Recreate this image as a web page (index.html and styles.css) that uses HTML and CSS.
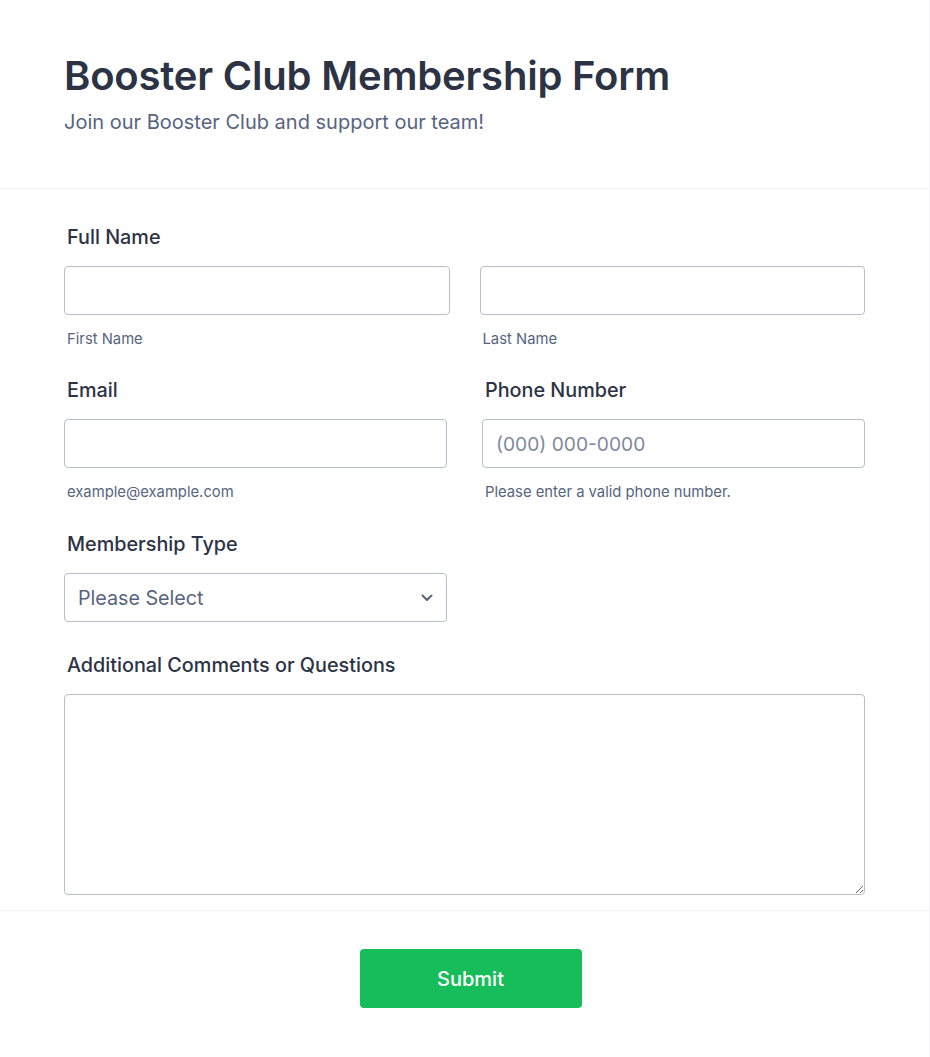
FILE: index.html
```html
<!DOCTYPE html>
<html lang="en">
<head>
<meta charset="utf-8">
<title>Booster Club Membership Form</title>
<link rel="stylesheet" href="styles.css">
</head>
<body>
<div class="card">
  <header class="form-header">
    <h1 class="title">Booster Club Membership Form</h1>
    <p class="subtitle">Join our Booster Club and support our team!</p>
  </header>
  <main class="form-body">
    <div class="field">
      <label class="label">Full Name</label>
      <div class="row name-row">
        <div class="col">
          <input class="input" type="text">
          <span class="sublabel">First Name</span>
        </div>
        <div class="col">
          <input class="input" type="text">
          <span class="sublabel">Last Name</span>
        </div>
      </div>
    </div>
    <div class="row pair-row">
      <div class="field col">
        <label class="label">Email</label>
        <input class="input" type="text">
        <span class="sublabel">example@example.com</span>
      </div>
      <div class="field col">
        <label class="label">Phone Number</label>
        <input class="input" type="text" placeholder="(000) 000-0000">
        <span class="sublabel">Please enter a valid phone number.</span>
      </div>
    </div>
    <div class="field half">
      <label class="label">Membership Type</label>
      <div class="select">
        <span>Please Select</span>
        <svg class="chev" width="12" height="8" viewBox="0 0 12 8"><path d="M1.5 1.5 6 6l4.5-4.5" fill="none" stroke="#57647e" stroke-width="2" stroke-linecap="round" stroke-linejoin="round"/></svg>
      </div>
    </div>
    <div class="field comments">
      <label class="label">Additional Comments or Questions</label>
      <textarea class="textarea"></textarea>
    </div>
  </main>
  <footer class="form-footer">
    <button class="submit" type="button">Submit</button>
  </footer>
</div>
</body>
</html>
```
FILE: styles.css
```css
* { box-sizing: border-box; }
html, body { margin: 0; padding: 0; }
body {
  background: #ffffff;
  font-family: Inter, "Noto Sans", sans-serif;
  color: #2c3345;
}
.card {
  width: 930px;
  min-height: 1057px;
  background: #fff;
  border-right: 1px solid #f3f3f8;
}
.form-header {
  padding: 52px 64px 0 64px;
  height: 189px;
  border-bottom: 1px solid #f3f3fe;
}
.title {
  margin: 0;
  font-size: 40px;
  line-height: 48px;
  font-weight: 600;
  color: #2c3345;
  letter-spacing: -0.2px;
}
.subtitle {
  margin: 10px 0 0 0;
  font-size: 20px;
  line-height: 24px;
  color: #57647e;
}
.form-body {
  padding: 36px 64px 0 64px;
  height: 722px;
  border-bottom: 1px solid #f3f3fe;
}
.field { display: flex; flex-direction: column; }
.label {
  font-size: 19.8px;
  line-height: 24px;
  font-weight: 500;
  color: #2c3345;
  padding-left: 3px;
  margin-bottom: 17px;
}
.row { display: flex; }
.name-row { gap: 30px; }
.name-row .col { flex: 1; }
.pair-row { justify-content: space-between; margin-top: 30px; }
.pair-row .col { width: 383px; }
.col { display: flex; flex-direction: column; }
.input {
  height: 49px;
  width: 100%;
  border: 1px solid #b8bdc9;
  border-radius: 4px;
  font-family: inherit;
  font-size: 19.2px;
  padding: 0 13px;
  color: #2c3345;
  outline: none;
}
.input::placeholder { color: #7f899e; }
.sublabel {
  font-size: 14.8px;
  line-height: 18px;
  color: #57647e;
  padding-left: 3px;
  margin-top: 15px;
}
.half { width: 383px; margin-top: 31px; }
.select {
  height: 49px;
  border: 1px solid #b8bdc9;
  border-radius: 4px;
  display: flex;
  align-items: center;
  justify-content: space-between;
  padding: 0 13px;
  font-size: 19.7px;
  color: #57647e;
}
.comments { margin-top: 31px; }
.textarea {
  height: 201px;
  width: 100%;
  border: 1px solid #b8bdc9;
  border-radius: 4px;
  font-family: inherit;
  resize: vertical;
  display: block;
}
.form-footer {
  display: flex;
  justify-content: center;
  padding-top: 38px;
  padding-left: 12px;
}
.submit {
  width: 222px;
  height: 59px;
  background: #18bd5b;
  color: #fff;
  border: none;
  border-radius: 4px;
  font-family: inherit;
  font-size: 20px;
  font-weight: 500;
}
```
